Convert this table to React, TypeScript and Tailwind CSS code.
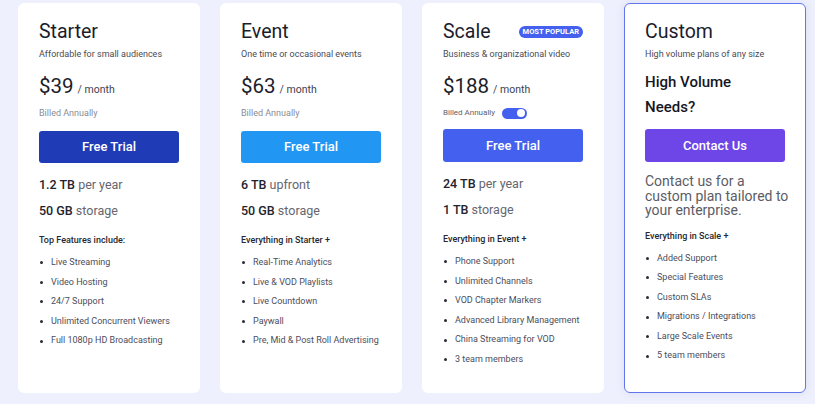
const features = {
  starter: [
    "Live Streaming",
    "Video Hosting",
    "24/7 Support",
    "Unlimited Concurrent Viewers",
    "Full 1080p HD Broadcasting",
  ],
  event: [
    "Real-Time Analytics",
    "Live & VOD Playlists",
    "Live Countdown",
    "Paywall",
    "Pre, Mid & Post Roll Advertising",
  ],
  scale: [
    "Phone Support",
    "Unlimited Channels",
    "VOD Chapter Markers",
    "Advanced Library Management",
    "China Streaming for VOD",
    "3 team members",
  ],
  custom: [
    "Added Support",
    "Special Features",
    "Custom SLAs",
    "Migrations / Integrations",
    "Large Scale Events",
    "5 team members",
  ],
};

function FeatureList({ items }: { items: string[] }) {
  return (
    <ul className="flex flex-col">
      {items.map((item) => (
        <li key={item} className="flex items-center whitespace-nowrap text-[9px] leading-[19.6px] text-[#4b4d5c]">
          <span className="ml-[1px] mr-[8px] h-[3px] w-[3px] shrink-0 rounded-full bg-[#2a2a35]" />
          {item}
        </li>
      ))}
    </ul>
  );
}

function Header({ title, subtitle, badge }: { title: string; subtitle: string; badge?: boolean }) {
  return (
    <>
      <div className="flex items-center justify-between">
        <h2 className="text-[19.5px] leading-[24px] text-[#1c1d2b]">{title}</h2>
        {badge && (
          <span className="flex h-[12px] items-center rounded-full bg-[#4361ee] px-[4px] text-[7.5px] font-bold leading-none text-white">
            MOST POPULAR
          </span>
        )}
      </div>
      <p className="mt-[2px] whitespace-nowrap text-[9px] leading-[16px] text-[#4a4b55]">{subtitle}</p>
    </>
  );
}

function Price({ amount }: { amount: string }) {
  return (
    <div className="mt-[11px] flex items-baseline gap-[4px]">
      <span className="text-[20.5px] leading-[26px] text-[#1c1d2b]">{amount}</span>
      <span className="text-[10.5px] text-[#3f4150]">/ month</span>
    </div>
  );
}

function Storage({ a, b, c, d }: { a: string; b: string; c: string; d: string }) {
  return (
    <>
      <p className="mt-[12px] text-[12.5px] leading-[20px]">
        <span className="font-medium text-[#22232e]">{a}</span>{" "}
        <span className="text-[#65666f]">{b}</span>
      </p>
      <p className="mt-[6px] text-[12.5px] leading-[20px]">
        <span className="font-medium text-[#22232e]">{c}</span>{" "}
        <span className="text-[#65666f]">{d}</span>
      </p>
    </>
  );
}

function Heading({ text }: { text: string }) {
  return (
    <p className="mt-[11px] text-[9px] font-medium leading-[16px] text-[#262731]">{text}</p>
  );
}

export default function App() {
  return (
    <div
      className="flex h-[404px] w-[815px] gap-[20px] bg-[#eef0fd] pl-[18px] pt-[3px]"
      style={{ fontFamily: "Roboto, 'Liberation Sans', sans-serif" }}
    >
      {/* Starter */}
      <div className="h-[390px] w-[182px] shrink-0 rounded-[6px] bg-white px-[21px] pt-[17px]">
        <Header title="Starter" subtitle="Affordable for small audiences" />
        <Price amount="$39" />
        <p className="mt-[7px] text-[9px] leading-[14px] text-[#8a8b92]">Billed Annually</p>
        <button className="mt-[11px] h-[32px] w-full rounded-[3px] bg-[#1f3bb5] text-[13px] font-medium text-white">
          Free Trial
        </button>
        <Storage a="1.2 TB" b="per year" c="50 GB" d="storage" />
        <Heading text="Top Features include:" />
        <div className="mt-[5px]">
          <FeatureList items={features.starter} />
        </div>
      </div>

      {/* Event */}
      <div className="h-[390px] w-[182px] shrink-0 rounded-[6px] bg-white px-[21px] pt-[17px]">
        <Header title="Event" subtitle="One time or occasional events" />
        <Price amount="$63" />
        <p className="mt-[7px] text-[9px] leading-[14px] text-[#8a8b92]">Billed Annually</p>
        <button className="mt-[11px] h-[32px] w-full rounded-[3px] bg-[#2196f3] text-[13px] font-medium text-white">
          Free Trial
        </button>
        <Storage a="6 TB" b="upfront" c="50 GB" d="storage" />
        <Heading text="Everything in Starter +" />
        <div className="mt-[5px]">
          <FeatureList items={features.event} />
        </div>
      </div>

      {/* Scale */}
      <div className="h-[390px] w-[182px] shrink-0 rounded-[6px] bg-white px-[21px] pt-[17px]">
        <Header title="Scale" subtitle="Business & organizational video" badge />
        <Price amount="$188" />
        <div className="mt-[7px] flex h-[14px] items-center gap-[7px]">
          <p className="text-[8px] leading-[14px] text-[#5f606a]">Billed Annually</p>
          <span className="flex h-[11px] w-[25px] items-center justify-end rounded-full bg-[#4361ee] pr-[2px]">
            <span className="h-[8px] w-[8px] rounded-full bg-white" />
          </span>
        </div>
        <button className="mt-[9px] h-[33px] w-full rounded-[3px] bg-[#4361ee] text-[13px] font-medium text-white">
          Free Trial
        </button>
        <Storage a="24 TB" b="per year" c="1 TB" d="storage" />
        <Heading text="Everything in Event +" />
        <div className="mt-[5px]">
          <FeatureList items={features.scale} />
        </div>
      </div>

      {/* Custom */}
      <div className="h-[390px] w-[182px] shrink-0 rounded-[6px] border-[1.5px] border-[#6176ea] bg-white px-[20px] pt-[16px] shadow-[0_0_10px_rgba(80,90,160,0.12)]">
        <Header title="Custom" subtitle="High volume plans of any size" />
        <p className="mt-[8px] text-[15px] font-medium leading-[24.5px] text-[#15161f]">
          High Volume
          <br />
          Needs?
        </p>
        <button className="mt-[10px] h-[33px] w-full rounded-[3px] bg-[#6e45e6] text-[13px] font-medium text-white">
          Contact Us
        </button>
        <p className="mt-[12px] whitespace-nowrap text-[14px] leading-[14.5px] text-[#5b5c66]">
          Contact us for a
          <br />
          custom plan tailored to
          <br />
          your enterprise.
        </p>
        <p className="mt-[10px] text-[9px] font-medium leading-[16px] text-[#262731]">
          Everything in Scale +
        </p>
        <div className="mt-[5px]">
          <FeatureList items={features.custom} />
        </div>
      </div>
    </div>
  );
}
